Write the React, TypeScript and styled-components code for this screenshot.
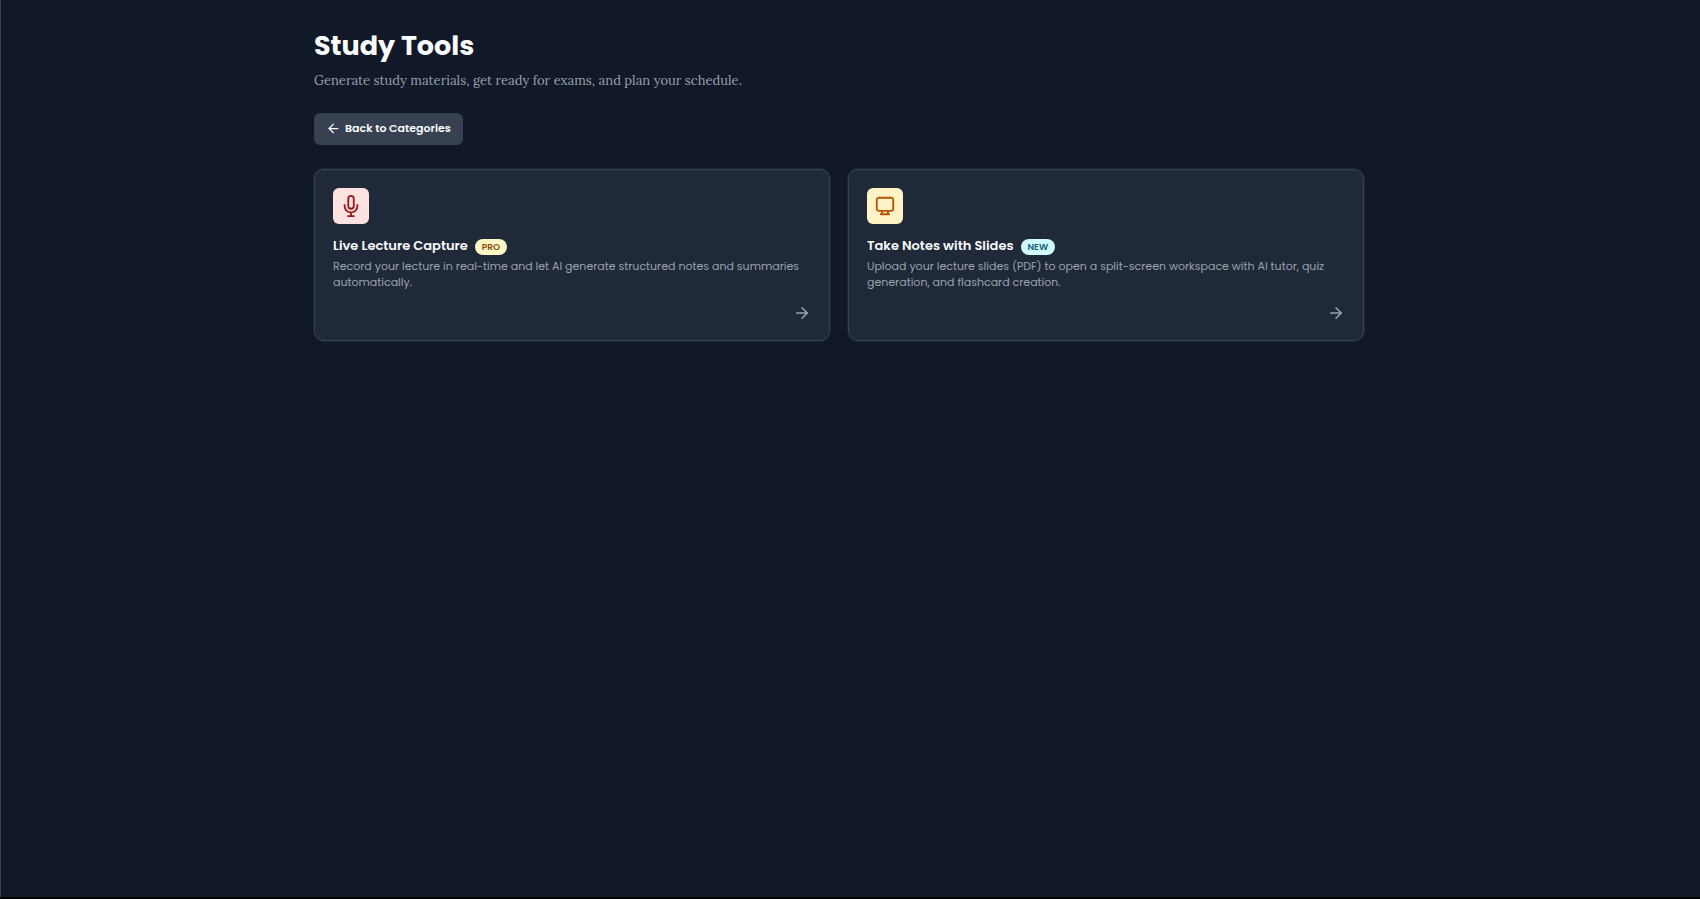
import React from "react";
import styled, { createGlobalStyle } from "styled-components";
import { ArrowLeft, ArrowRight } from "lucide-react";

const GlobalStyle = createGlobalStyle`
  *, *::before, *::after { box-sizing: border-box; }
  html { background: #000; }
  body {
    margin: 0;
    color: #f9fafb;
    font-family: Poppins, Inter, "Noto Sans", sans-serif;
  }
`;

const Page = styled.main`
  min-height: calc(100vh - 2px);
  padding: 28px 44px 28px 21px;
  border-left: 1px solid #374151;
  background: #111827;
`;

const Content = styled.div`
  max-width: 1050px;
  margin: 0 auto;
`;

const Title = styled.h1`
  margin: 0;
  font-size: 27px;
  font-weight: 700;
  line-height: 36px;
`;

const Subtitle = styled.p`
  margin: 7px 0 0;
  color: #9ca3af;
  font-family: Lora, "Liberation Serif", serif;
  font-size: 13px;
  line-height: 20px;
`;

const BackButton = styled.button`
  display: flex;
  align-items: center;
  gap: 4px;
  height: 32px;
  margin: 22px 0 24px;
  padding: 0 12px 2px;
  border: 0;
  border-radius: 6px;
  background: #374151;
  color: #f9fafb;
  font-family: inherit;
  font-size: 11px;
  font-weight: 600;
  line-height: 16px;
  cursor: pointer;
`;

const CardGrid = styled.div`
  display: grid;
  grid-template-columns: repeat(auto-fit, minmax(300px, 1fr));
  gap: 18px;
`;

const Card = styled.a`
  display: flex;
  flex-direction: column;
  min-height: 172px;
  padding: 18px;
  border: 1px solid #374151;
  border-radius: 10px;
  background: #1f2937;
  box-shadow: 0 0 0 1px #1c2535;
  color: inherit;
  text-decoration: none;
`;

const IconTile = styled.span<{ $bg: string; $fg: string }>`
  display: flex;
  align-items: center;
  justify-content: center;
  width: 36px;
  height: 36px;
  border-radius: 6px;
  background: ${(p) => p.$bg};
  color: ${(p) => p.$fg};
`;

const CardHeading = styled.div`
  display: flex;
  align-items: flex-end;
  gap: 7px;
  margin-top: 13px;
`;

const CardTitle = styled.h2`
  margin: 0;
  font-size: 13px;
  font-weight: 600;
  line-height: 18px;
`;

const Badge = styled.span<{ $bg: string; $fg: string }>`
  padding: 0 7px;
  border-radius: 8px;
  background: ${(p) => p.$bg};
  color: ${(p) => p.$fg};
  font-size: 9px;
  font-weight: 600;
  line-height: 16px;
`;

const Description = styled.p`
  margin: 3px 0 0;
  color: #9ca3af;
  font-size: 11px;
  line-height: 16px;
`;

const CardFooter = styled.span`
  display: flex;
  justify-content: flex-end;
  margin-top: auto;
  color: #9ca3af;
`;

const MicIcon = () => (
  <svg width="22" height="22" viewBox="0 0 24 24" fill="none" stroke="currentColor"
    strokeWidth="2" aria-hidden="true">
    <path d="M12 1a3 3 0 0 0-3 3v8a3 3 0 0 0 6 0V4a3 3 0 0 0-3-3z" />
    <path d="M19 10v2a7 7 0 0 1-14 0v-2M12 19v4M8 23h8" />
  </svg>
);

const SlidesIcon = () => (
  <svg width="22" height="22" viewBox="0 0 24 24" fill="none" stroke="currentColor"
    strokeWidth="2" strokeLinecap="round" strokeLinejoin="round" aria-hidden="true">
    <path d="M9 17.25v1.007a3 3 0 0 1-.879 2.122L7.5 21h9l-.621-.621A3 3 0 0 1 15 18.257V17.25m6-12V15a2.25 2.25 0 0 1-2.25 2.25H5.25A2.25 2.25 0 0 1 3 15V5.25A2.25 2.25 0 0 1 5.25 3h13.5A2.25 2.25 0 0 1 21 5.25Z" />
  </svg>
);

const tools = [
  {
    title: "Live Lecture Capture",
    badge: "PRO",
    badgeBg: "#fef9c3",
    badgeFg: "#854d0e",
    tileBg: "#fee2e2",
    tileFg: "#991b1b",
    icon: <MicIcon />,
    text: "Record your lecture in real-time and let AI generate structured notes and summaries automatically.",
  },
  {
    title: "Take Notes with Slides",
    badge: "NEW",
    badgeBg: "#cffafe",
    badgeFg: "#155e75",
    tileBg: "#fef3c7",
    tileFg: "#b45309",
    icon: <SlidesIcon />,
    text: "Upload your lecture slides (PDF) to open a split-screen workspace with AI tutor, quiz generation, and flashcard creation.",
  },
];

export default function App() {
  return (
    <>
      <GlobalStyle />
      <Page>
        <Content>
          <Title>Study Tools</Title>
          <Subtitle>Generate study materials, get ready for exams, and plan your schedule.</Subtitle>
          <BackButton type="button">
            <ArrowLeft size={15} />
            Back to Categories
          </BackButton>
          <CardGrid>
            {tools.map((tool) => (
              <Card key={tool.title} href="#">
                <IconTile $bg={tool.tileBg} $fg={tool.tileFg}>{tool.icon}</IconTile>
                <CardHeading>
                  <CardTitle>{tool.title}</CardTitle>
                  <Badge $bg={tool.badgeBg} $fg={tool.badgeFg}>{tool.badge}</Badge>
                </CardHeading>
                <Description>{tool.text}</Description>
                <CardFooter><ArrowRight size={18} /></CardFooter>
              </Card>
            ))}
          </CardGrid>
        </Content>
      </Page>
    </>
  );
}
